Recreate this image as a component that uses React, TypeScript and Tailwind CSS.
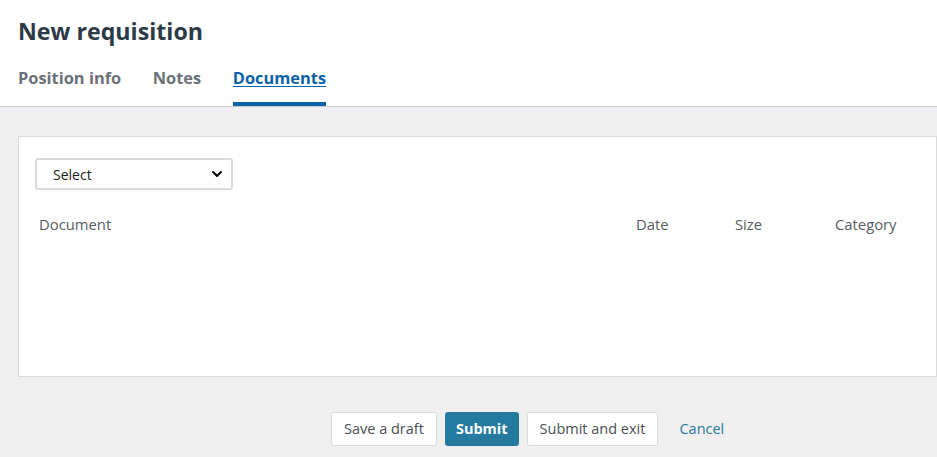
import { ChevronDown } from 'lucide-react';

const tabs = [
  { label: 'Position info', active: false },
  { label: 'Notes', active: false },
  { label: 'Documents', active: true },
];

export default function App() {
  return (
    <div className="min-h-[457px] w-[937px] overflow-hidden bg-[#efefef] font-['Open_Sans',sans-serif]">
      {/* Header */}
      <div className="border-b border-[#bfcbd6] bg-white pl-[18px]">
        <h1 className="pt-[14px] text-[23.2px] font-bold leading-[34px] text-[#2c3a47]">New requisition</h1>
        <div className="mt-[19px] flex gap-[31.6px]">
          {tabs.map((t) => (
            <div
              key={t.label}
              className={`border-b-4 pb-[13px] text-[16.4px] font-bold leading-[22px] ${
                t.active ? 'border-[#0b62a8] text-[#0b62a8] underline underline-offset-2' : 'border-transparent text-[#6b7178]'
              }`}
            >
              {t.label}
            </div>
          ))}
        </div>
      </div>

      {/* Card */}
      <div className="ml-[18px] mt-[29px] h-[241px] border border-[#dadada] bg-white pl-4 pt-[21px]">
        <div className="flex h-[32px] w-[198px] items-center justify-between rounded-[3px] border-2 border-[#dadada] pl-[16px] pr-[6px] text-[14px] text-[#222]">
          <span>Select</span>
          <ChevronDown className="h-4 w-4 text-black" strokeWidth={3} />
        </div>
        <div className="mt-[24px] flex text-[14.8px] leading-[20px] text-[#555c63]">
          <div className="w-[601px] pl-[4px]">Document</div>
          <div className="w-[99px]">Date</div>
          <div className="w-[100px]">Size</div>
          <div>Category</div>
        </div>
      </div>

      {/* Actions */}
      <div className="mt-[35px] flex items-center pl-[331px] text-[14.5px]">
        <button className="h-[34px] rounded-[3px] border border-[#dadada] bg-white px-3 text-[#4a4f55]">Save a draft</button>
        <button className="ml-2 h-[34px] rounded-[3px] bg-[#247a9f] px-[11px] font-bold text-white">Submit</button>
        <button className="ml-2 h-[34px] rounded-[3px] border border-[#dadada] bg-white px-3 text-[#4a4f55]">Submit and exit</button>
        <button className="ml-[21px] text-[#2a78a0]">Cancel</button>
      </div>
    </div>
  );
}
